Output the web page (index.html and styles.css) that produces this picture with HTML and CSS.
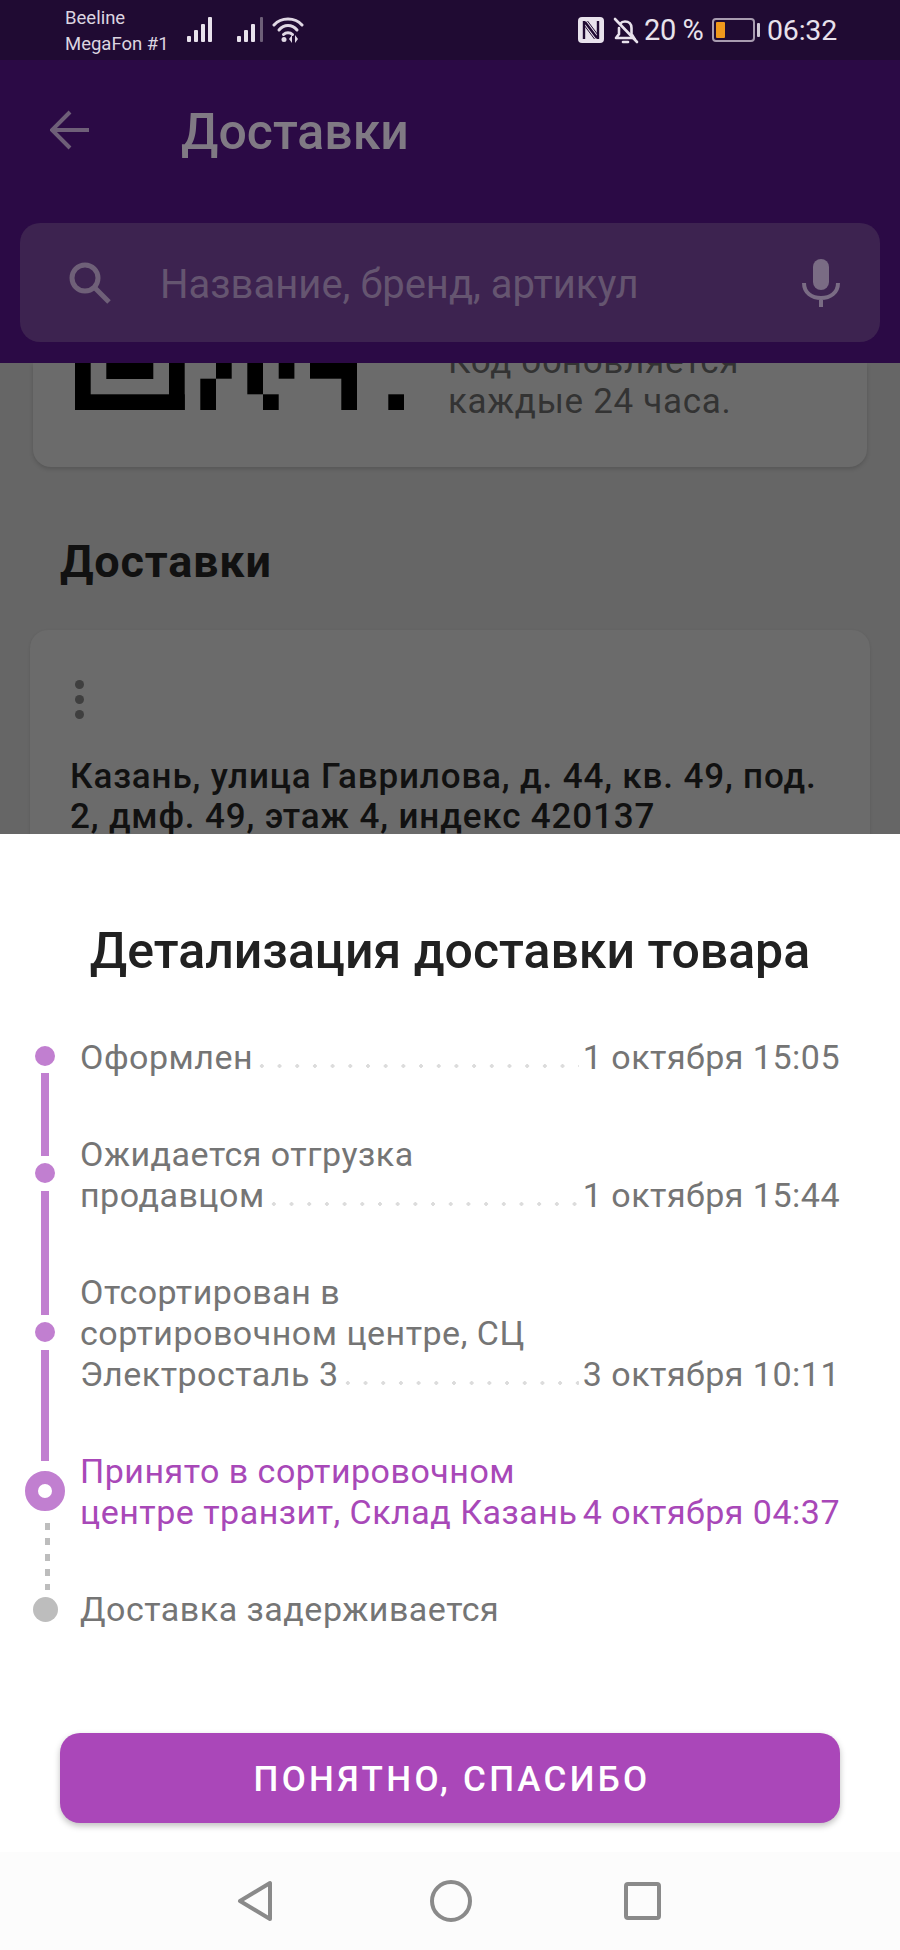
FILE: index.html
```html
<!DOCTYPE html>
<html lang="ru">
<head>
<meta charset="utf-8">
<title>Доставки</title>
<link rel="stylesheet" href="styles.css">
</head>
<body>
<div class="phone">
  <header class="status">
    <div class="carriers"><span>Beeline</span><span>MegaFon #1</span></div>
    <svg class="sig sig-a" width="26" height="25" viewBox="0 0 26 25"><rect x="0" y="19" width="4" height="6" rx="1"/><rect x="7" y="13" width="4" height="12" rx="1"/><rect x="14" y="7" width="4" height="18" rx="1"/><rect x="21" y="0" width="4" height="25" rx="1"/></svg>
    <svg class="sig sig-b" width="28" height="25" viewBox="0 0 28 25"><rect x="0" y="19" width="4" height="6" rx="1"/><rect x="7" y="13" width="4" height="12" rx="1"/><rect x="14" y="7" width="4" height="18" rx="1"/><rect class="dim" x="23" y="0" width="3" height="25" rx="1"/></svg>
    <svg class="wifi" width="32" height="27" viewBox="0 0 32 27"><g fill="none" stroke="#e0d8e4" stroke-width="3" stroke-linecap="round"><path d="M2 9 C9 1 23 1 30 9"/><path d="M7 14 C12 8 20 8 25 14"/><path d="M11.500 18.500 C14 16 18 16 20.500 18.500"/></g><circle cx="12" cy="23.500" r="2.500" fill="#e0d8e4"/><path d="M20 19 v8 l-3 -4 z M23 19 v8 l3 -4 z" fill="#e0d8e4"/></svg>
    <div class="status-right">
      <svg class="nfc" width="26" height="26" viewBox="0 0 26 26"><rect width="26" height="26" rx="4" fill="#e8e2ec"/><path d="M6 4 V22 M20 4 V22 M7 5 L19 21" fill="none" stroke="#200b33" stroke-width="2.400"/><path d="M9.500 4 L20 18 M6 8 L16.500 22" fill="none" stroke="#200b33" stroke-width="1"/></svg>
      <svg class="bell" width="26" height="27" viewBox="0 0 26 27"><g fill="none" stroke="#e8e2ec" stroke-width="2.600" stroke-linecap="round"><path d="M3 21 H21 L18.500 17 V11 C18.500 7 16 4.500 12 4.500 C10 4.500 8.500 5 7.500 6.500 M6 11 V17 L3 21"/><path d="M2 2 L24 25"/><path d="M10 25 H15"/></g></svg>
      <span class="pct">20 %</span>
      <div class="batt"><div class="batt-body"><div class="batt-fill"></div></div><div class="batt-cap"></div></div>
      <span class="clock">06:32</span>
    </div>
  </header>

  <section class="appbar">
    <div class="toolbar">
      <svg class="back" width="40" height="40" viewBox="0 0 40 40"><path d="M39 20 H3 M20 2 L2 20 L20 38" fill="none" stroke="#6e5f78" stroke-width="4"/></svg>
      <h1 class="app-title">Доставки</h1>
    </div>
    <div class="search">
      <svg class="search-ico" width="44" height="44" viewBox="0 0 44 44"><circle cx="17" cy="17" r="13" fill="none" stroke="#6f6078" stroke-width="5"/><path d="M26.500 26.500 L41 41" stroke="#6f6078" stroke-width="5"/></svg>
      <span class="placeholder">Название, бренд, артикул</span>
      <svg class="mic" width="38" height="48" viewBox="0 0 38 48"><rect x="11" y="0" width="16" height="31" rx="8" fill="#7a6c84"/><path d="M2 24 C2 34 10 39 19 39 C28 39 36 34 36 24 M19 38 V48" fill="none" stroke="#7a6c84" stroke-width="4"/></svg>
    </div>
  </section>

  <main class="backdrop">
    <div class="qr-card">
      <svg class="qr" width="330" height="47" viewBox="0 0 330 47"><g fill="#000"><rect x="0" y="0" width="15.700" height="47"/><rect x="94" y="0" width="15.700" height="47"/><rect x="0" y="31.300" width="109.700" height="15.700"/><rect x="31.300" y="0" width="47" height="16"/><rect x="125.300" y="15.700" width="15.700" height="31.300"/><rect x="141" y="0" width="15.700" height="15.700"/><rect x="172.300" y="0" width="15.700" height="31.300"/><rect x="188" y="31.300" width="15.700" height="15.700"/><rect x="203.700" y="0" width="15.700" height="15.700"/><rect x="235" y="0" width="47" height="15.700"/><rect x="266.300" y="0" width="15.700" height="47"/><rect x="313.300" y="31.300" width="15.700" height="15.700"/></g></svg>
      <p class="qr-note">Код обновляется<br>каждые 24 часа.</p>
    </div>
    <h2 class="section-title">Доставки</h2>
    <div class="delivery-card">
      <div class="kebab"><i></i><i></i><i></i></div>
      <p class="address">Казань, улица Гаврилова, д. 44, кв. 49, под.<br>2, дмф. 49, этаж 4, индекс 420137</p>
    </div>
  </main>

  <section class="sheet">
    <h2 class="sheet-title">Детализация доставки товара</h2>
    <div class="timeline">
      <div class="rail">
        <i class="dot dot-1"></i><i class="bar bar-1"></i>
        <i class="dot dot-2"></i><i class="bar bar-2"></i>
        <i class="dot dot-3"></i><i class="bar bar-3"></i>
        <i class="ring"></i><i class="dashes"></i>
        <i class="dot-end"></i>
      </div>
      <ol class="rows">
        <li class="row"><div class="line"><span>Оформлен</span><span class="leader"></span><span>1 октября 15:05</span></div></li>
        <li class="row">Ожидается отгрузка<div class="line"><span>продавцом</span><span class="leader"></span><span>1 октября 15:44</span></div></li>
        <li class="row">Отсортирован в<br>сортировочном центре, СЦ<div class="line"><span>Электросталь 3</span><span class="leader"></span><span>3 октября 10:11</span></div></li>
        <li class="row row-now">Принято в сортировочном<div class="line"><span>центре транзит, Склад Казань</span><span>4 октября 04:37</span></div></li>
        <li class="row">Доставка задерживается</li>
      </ol>
    </div>
    <button class="cta" type="button">ПОНЯТНО, СПАСИБО</button>
    <nav class="navbar">
      <svg width="36" height="42" viewBox="0 0 36 42"><path d="M33 3 V39 L3 21 Z" fill="none" stroke="#8a8a8a" stroke-width="4" stroke-linejoin="round"/></svg>
      <svg width="42" height="42" viewBox="0 0 42 42"><circle cx="21" cy="21" r="19" fill="none" stroke="#8a8a8a" stroke-width="4"/></svg>
      <svg width="37" height="38" viewBox="0 0 37 38"><rect x="2" y="2" width="33" height="34" rx="2" fill="none" stroke="#8a8a8a" stroke-width="4"/></svg>
    </nav>
  </section>
</div>
</body>
</html>
```
FILE: styles.css
```css
* { box-sizing: border-box; }
html, body { margin: 0; padding: 0; }
body { font-family: Roboto, "Noto Sans", sans-serif; background: #666; }
h1, h2, p, ol { margin: 0; padding: 0; }
ol { list-style: none; }
i { display: block; }

.phone { width: 900px; height: 1950px; display: flex; flex-direction: column; overflow: hidden; }

/* status bar */
.status { height: 60px; flex: none; background: #200b33; display: flex; align-items: flex-start; padding-left: 65px; color: #e8e2ec; }
.carriers { display: flex; flex-direction: column; width: 122px; font-size: 18.500px; line-height: 26px; padding-top: 5px; color: #dcd5e0; white-space: nowrap; }
.sig { margin-top: 17px; fill: #e8e2ec; flex: none; }
.sig .dim { fill: #6d5f78; }
.sig-a { margin-right: 24px; }
.sig-b { margin-right: 7px; }
.wifi { margin-top: 16px; flex: none; }
.status-right { margin-left: auto; padding-right: 63px; display: flex; align-items: center; height: 60px; }
.nfc { margin-right: 9px; }
.bell { margin-right: 5px; }
.pct { font-size: 29px; width: 68px; letter-spacing: -.4px; }
.clock { font-size: 28.500px; margin-left: 7px; letter-spacing: -.2px; }
.batt { display: flex; align-items: center; gap: 2px; }
.batt-body { width: 43px; height: 24px; border: 2px solid #a89cb0; border-radius: 4px; padding: 2px; }
.batt-fill { width: 9px; height: 100%; background: #f0981c; border-radius: 1px; }
.batt-cap { width: 3px; height: 14px; background: #cfc8d4; border-radius: 1px; }

/* app bar */
.appbar { height: 303px; flex: none; background: #2b0a45; display: flex; flex-direction: column; padding: 0 20px; }
.toolbar { height: 163px; flex: none; display: flex; align-items: flex-start; padding: 50px 0 0 30px; }
.app-title { font-size: 50px; line-height: 44px; font-weight: 500; color: #807a84; margin: 0 0 0 91px; white-space: nowrap; }
.search { height: 119px; background: #3d2350; border-radius: 20px; display: flex; align-items: center; padding: 0 40px 0 48px; }
.search-ico { flex: none; }
.placeholder { font-size: 40px; line-height: 48px; padding-top: 4px; color: #655570; margin-left: 48px; flex: 1; white-space: nowrap; }
.mic { flex: none; }

/* dimmed page behind the sheet */
.backdrop { flex: 1; background: #666; overflow: hidden; min-height: 0; }
.qr-card { height: 104px; margin: 0 33px; background: #6b6b6b; border-radius: 0 0 18px 18px; box-shadow: 0 2px 4px rgba(0,0,0,.16); display: flex; align-items: flex-start; padding-left: 42px; }
.qr { flex: none; }
.qr-note { font-size: 35px; line-height: 40px; color: #333; margin: -21px 0 0 43px; letter-spacing: .7px; white-space: nowrap; }
.section-title { font-size: 45px; line-height: 48px; font-weight: 700; color: #111; margin: 71px 0 0 60px; letter-spacing: .8px; }
.delivery-card { margin: 44px 30px 0; height: 300px; background: #6b6b6b; border-radius: 18px; padding: 50px 40px 0; box-shadow: 0 1px 3px rgba(0,0,0,.12); }
.kebab { display: flex; flex-direction: column; gap: 6px; width: 20px; margin-left: 5px; }
.kebab i { width: 9px; height: 9px; border-radius: 50%; background: #3f3f3f; }
.address { margin-top: 38px; font-size: 35px; line-height: 40px; font-weight: 500; color: #111; letter-spacing: .85px; white-space: nowrap; }

/* bottom sheet */
.sheet { height: 1116px; flex: none; background: #fff; display: flex; flex-direction: column; }
.sheet-title { font-size: 50px; line-height: 54px; font-weight: 500; color: #212121; text-align: center; margin-top: 90px; }
.timeline { display: flex; margin-top: 59px; }
.rail { width: 40px; margin-left: 25px; display: flex; flex-direction: column; align-items: center; padding-top: 9px; flex: none; }
.dot { width: 20px; height: 20px; border-radius: 50%; background: #c17fd0; }
.bar { width: 8px; background: #c17fd0; }
.bar-1 { height: 83px; margin: 7px 0; }
.bar-2 { height: 124px; margin: 8px 0 7px; }
.bar-3 { height: 111px; margin: 8px 0 10px; }
.ring { width: 40px; height: 40px; border-radius: 50%; border: 13px solid #c17fd0; background: #fff; }
.dashes { width: 5px; height: 67px; margin: 12px 0 7px 5px; background: repeating-linear-gradient(to bottom, #bdbdbd 0, #bdbdbd 7px, transparent 7px, transparent 15.300px); }
.dot-end { width: 25px; height: 25px; border-radius: 50%; background: #bdbdbd; }

.rows { width: 760px; margin-left: 15px; display: flex; flex-direction: column; gap: 56px; }
.row { font-size: 34px; line-height: 41px; color: #757575; letter-spacing: .5px; white-space: nowrap; }
.line { display: flex; justify-content: space-between; }
.leader { flex: 1; height: 41px; margin-right: 4px; background: radial-gradient(circle at center, #dcdcdc 1.600px, transparent 2px) left 26px / 17.700px 6px repeat-x; }
.row-now { color: #a848b8; }

.cta { margin: auto 60px 0; height: 90px; flex: none; border: 0; border-radius: 20px; padding: 2px 0 0 4px; background: #aa47b9; color: #fff; font-family: inherit; font-size: 35px; font-weight: 500; letter-spacing: 3.300px; box-shadow: 0 3px 6px rgba(0,0,0,.25); }
.navbar { height: 98px; flex: none; margin-top: 29px; background: #fcfcfc; display: flex; align-items: center; justify-content: center; }
.navbar svg:nth-child(1) { margin-left: -2px; }
.navbar svg:nth-child(2) { margin-left: 157px; }
.navbar svg:nth-child(3) { margin-left: 152px; }
```
